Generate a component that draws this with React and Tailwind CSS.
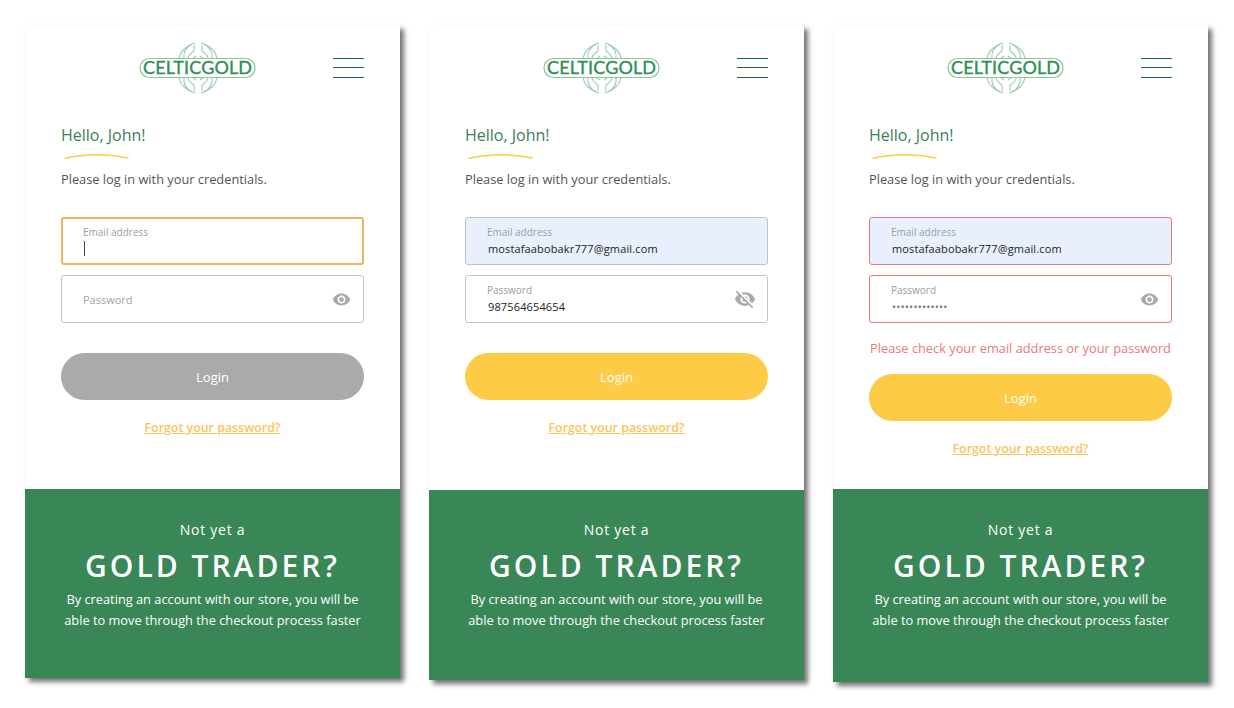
import React from 'react';
import { MdVisibility, MdVisibilityOff } from 'react-icons/md';

const Logo = () => (
  <svg width="118" height="54" viewBox="0 0 118 54" className="block">
    {/* celtic knot loops */}
    <g fill="none" stroke="#9ccdae" strokeWidth="1.1">
      <path d="M56 2 C48 4 41 10 40 18 C39 24 43 29 49 33 L57 39" />
      <path d="M55 4 L55 10 C50 13 48 17 49 21 C50 24 53 26 57 27" />
      <path d="M53 3 C46 7 44 12 45 18 C46 23 50 27 57 29" />
      <path d="M62 2 C70 4 77 10 78 18 C79 24 75 29 69 33 L61 39" />
      <path d="M63 4 L63 10 C68 13 70 17 69 21 C68 24 65 26 61 27" />
      <path d="M65 3 C72 7 74 12 73 18 C72 23 68 27 61 29" />
      <path d="M56 52 C48 50 41 44 40 36 C39 30 43 25 49 21 L57 15" />
      <path d="M55 50 L55 44 C50 41 48 37 49 33 C50 30 53 28 57 27" />
      <path d="M53 51 C46 47 44 42 45 36 C46 31 50 27 57 25" />
      <path d="M62 52 C70 50 77 44 78 36 C79 30 75 25 69 21 L61 15" />
      <path d="M63 50 L63 44 C68 41 70 37 69 33 C68 30 65 28 61 27" />
      <path d="M65 51 C72 47 74 42 73 36 C72 31 68 27 61 25" />
    </g>
    <rect x="1" y="17.5" width="115" height="19" rx="9.5" fill="#fff" stroke="#8cc4a0" strokeWidth="1.2" />
    <text x="58.5" y="33" textAnchor="middle" textLength="109" lengthAdjust="spacing" fontFamily="Lato, sans-serif" fontWeight="400" fontSize="18" stroke="#2f8f55" strokeWidth="0.35" fill="#2f8f55">
      CELTICGOLD
    </text>
  </svg>
);

const Burger = () => (
  <div className="flex w-[31px] flex-col pt-[1px]">
    <div className="h-px bg-[#146c38]" />
    <div className="mt-[8px] h-px bg-[#146c38]" />
    <div className="mt-[9px] h-px bg-[#146c38]" />
  </div>
);

const Field = ({ label, value, box, icon, caret, valueClass = 'text-[#222]' }) => (
  <div className={`flex h-12 items-center justify-between rounded-[3px] pr-[13px] ${box}`}>
    {value || caret ? (
      <div className="mb-[2px] flex flex-col">
        <span className="text-[10px] leading-[14px] text-[#9c9ca6]">{label}</span>
        {caret ? (
          <span className="mt-[2px] ml-px h-[15px] w-px bg-[#444]" />
        ) : (
          <span className={`mt-[2px] pl-px text-[11px] leading-[15px] tracking-[0.14px] ${valueClass}`}>{value}</span>
        )}
      </div>
    ) : (
      <span className="mt-[2px] text-[11px] text-[#a5a5a5]">{label}</span>
    )}
    {icon}
  </div>
);

const Screen = ({ topClass, bottomClass, emailBox, passBox, email, password, focus, off, error, buttonClass, passClass }) => (
  <div className="flex w-[375px] flex-col shadow-[4px_4px_5px_rgba(0,0,0,0.55)]">
    <div className={`flex flex-col bg-white px-9 ${topClass}`}>
      <div className="flex items-start justify-between pl-[78px] pt-4">
        <Logo />
        <div className="pt-[16px]">
          <Burger />
        </div>
      </div>
      <h2 className="mt-[29px] text-base leading-[22px] font-normal text-[#3b8058]">Hello, John!</h2>
      <svg width="65" height="7" viewBox="0 0 65 7" className="mt-[7px] ml-[3px] block">
        <path d="M0.5 5.5 C20 1 44 1 64.5 5" fill="none" stroke="#fdcb45" strokeWidth="1.5" />
      </svg>
      <p className="mt-[10px] text-[12.8px] leading-[18px] text-[#555]">Please log in with your credentials.</p>
      <div className="mt-[29px] flex flex-col gap-[10px]">
        <Field label="Email address" value={email} caret={focus} box={emailBox} />
        <Field
          label="Password"
          value={password}
          box={passBox}
          valueClass={passClass}
          icon={
            off ? (
              <MdVisibilityOff className="mr-[-2px] text-[#aaa]" size={22} />
            ) : (
              <MdVisibility className="mr-[-1px] text-[#aaa]" size={19} />
            )
          }
        />
      </div>
      {error ? (
        <p className="mt-4 text-center text-[12.8px] leading-[18px] whitespace-nowrap text-[#ea7a7a]">Please check your email address or your password</p>
      ) : null}
      <button className={`h-[47px] rounded-full pt-[2px] text-[13px] text-white ${error ? 'mt-[17px]' : 'mt-[30px]'} ${buttonClass}`}>Login</button>
      <a className="mt-[19px] text-center text-[12.4px] leading-[18px] font-semibold text-[#fdc45c] underline">Forgot your password?</a>
    </div>
    <div className={`flex flex-col items-center bg-[#398657] text-white ${bottomClass}`}>
      <p className="text-sm leading-5 font-medium tracking-[0.75px]">Not yet a</p>
      <h1 className="mt-[5px] text-[30px] leading-[41px] font-semibold tracking-[3px]">GOLD TRADER?</h1>
      <p className="mt-[3px] w-[320px] text-center text-[12.8px] leading-[21px]">
        By creating an account with our store, you will be able to move through the checkout process faster
      </p>
    </div>
  </div>
);

export default function App() {
  return (
    <div className="flex min-h-[708px] items-start gap-[29px] bg-white pl-[25px] pt-[25px] font-['Open_Sans',sans-serif]">
      <Screen
        topClass="h-[464px]"
        bottomClass="h-[189px] pt-[31px]"
        emailBox="border-2 border-[#e8b860] pl-[20px]"
        passBox="border border-[#c4c4c4] pl-[21px]"
        focus
        buttonClass="bg-[#aaaaaa]"
      />
      <Screen
        topClass="h-[465px]"
        bottomClass="h-[190px] pt-[30px]"
        emailBox="border border-[#b9c2d0] bg-[#e8f0fe] pl-[21px]"
        passBox="border border-[#c4c4c4] pl-[21px]"
        email="mostafaabobakr777@gmail.com"
        password="987564654654"
        off
        buttonClass="bg-[#fdcb45]"
      />
      <Screen
        topClass="h-[464px]"
        bottomClass="h-[193px] pt-[31px]"
        emailBox="border border-[#ea7a7a] bg-[#e8f0fe] pl-[21px]"
        passBox="border border-[#ea7a7a] pl-[21px]"
        email="mostafaabobakr777@gmail.com"
        password="•••••••••••••"
        passClass="text-[#777] tracking-[-0.85px]"
        error
        buttonClass="bg-[#fdcb45]"
      />
    </div>
  );
}
